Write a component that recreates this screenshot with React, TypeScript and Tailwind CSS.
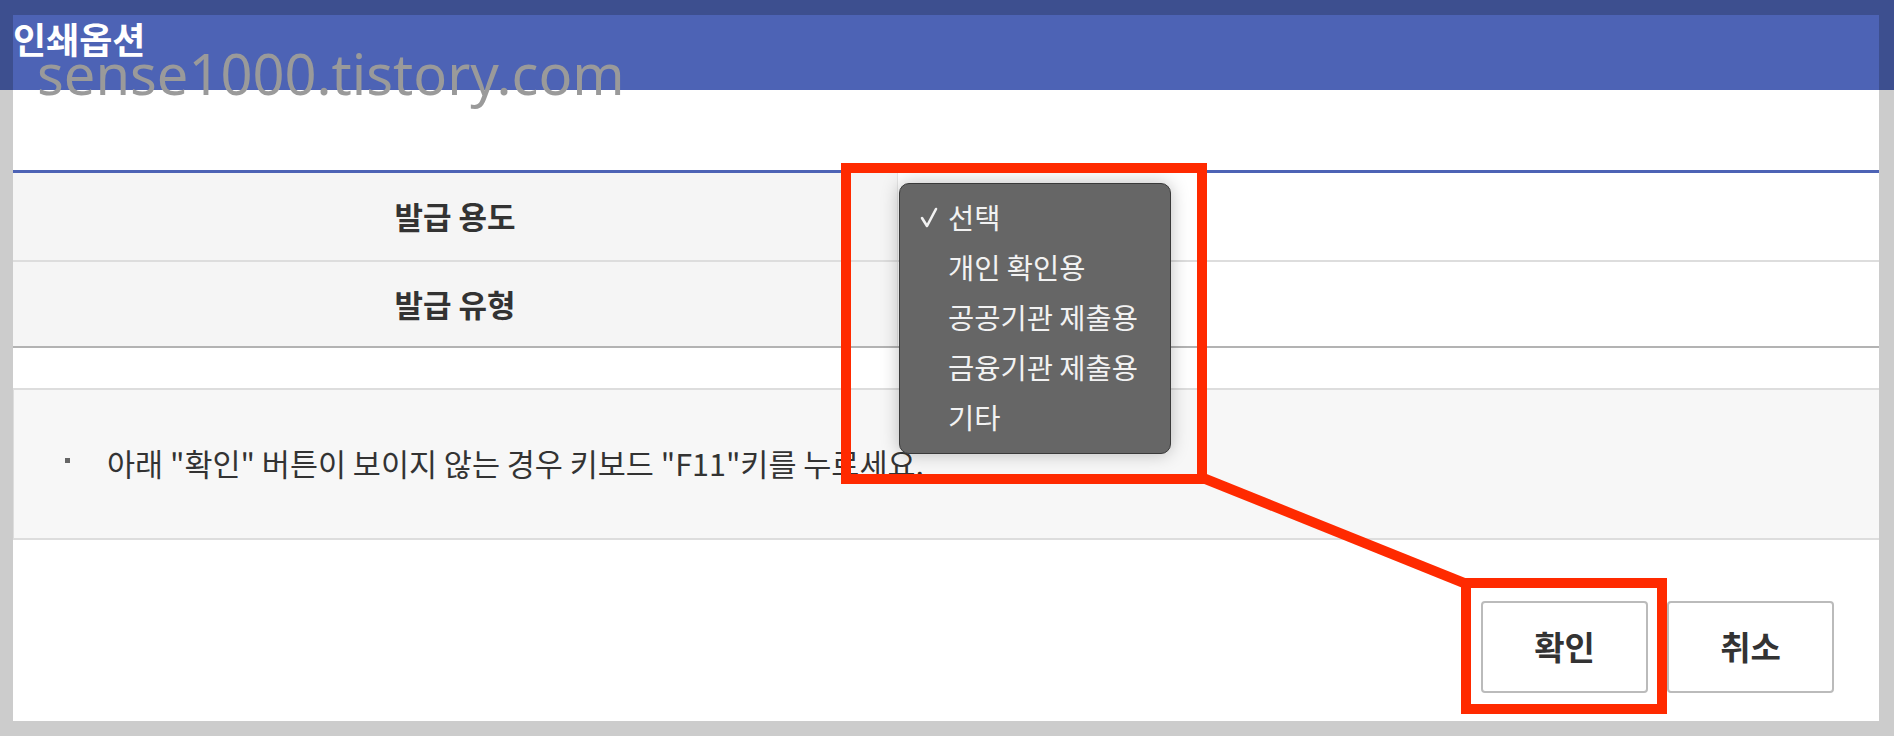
import React from 'react';

const options = [
  { label: '선택', checked: true },
  { label: '개인 확인용', checked: false },
  { label: '공공기관 제출용', checked: false },
  { label: '금융기관 제출용', checked: false },
  { label: '기타', checked: false },
];

const rows = ['발급 용도', '발급 유형'];

export default function App() {
  return (
    <div className="relative w-[1894px] h-[736px] overflow-hidden bg-[linear-gradient(to_bottom,#3d4f8f_90px,#cccccc_90px)] pt-[15px] pl-[13px] pr-[15px] font-['Noto_Sans_CJK_KR',sans-serif]">
      {/* popup window */}
      <div className="flex flex-col h-[706px] bg-white">
        <div className="h-[75px] bg-[#4d63b5] pt-[5px]">
          <h1 className="text-[36px] leading-none font-bold text-white">인쇄옵션</h1>
        </div>
        <div className="h-[80px]" />
        <div className="h-[3px] bg-[#4d63b5]" />

        <div className="border-b-2 border-[#b3b3b3]">
          {rows.map((label, idx) => (
            <div
              key={label}
              className={`flex ${idx === 0 ? 'h-[89px] border-b-2 border-[#dddddd]' : 'h-[84px]'}`}
            >
              <div className="w-[885px] flex items-center justify-center bg-[#f5f5f5] border-r border-[#e5e5e5] text-[31px] font-bold text-[#333333]">
                {label}
              </div>
              <div className="flex-1 bg-white" />
            </div>
          ))}
        </div>

        <div className="h-[40px]" />

        <div className="h-[152px] flex items-center bg-[#f7f7f7] border-y-2 border-l border-[#dddddd] pl-[51px]">
          <span className="w-[5px] h-[5px] bg-[#666666] -mt-[8px]" />
          <p className="ml-[37px] text-[30.5px] text-[#333333]">
            아래 "확인" 버튼이 보이지 않는 경우 키보드 "F11"키를 누르세요.
          </p>
        </div>

        <div className="flex justify-end gap-[19px] pt-[61px] pr-[45px]">
          <button className="w-[167px] h-[92px] rounded-[4px] border-2 border-[#bbbbbb] bg-white text-[33px] font-bold text-[#333333]">
            확인
          </button>
          <button className="w-[167px] h-[92px] rounded-[4px] border-2 border-[#bbbbbb] bg-white text-[33px] font-bold text-[#333333]">
            취소
          </button>
        </div>
      </div>

      {/* watermark */}
      <div className="absolute left-[37px] top-[45px] text-[56px] leading-none text-[#9a9a9a] font-['Noto_Sans',sans-serif] whitespace-nowrap">
        sense1000.tistory.com
      </div>

      {/* native select popup */}
      <div className="absolute left-[899px] top-[183px] w-[272px] h-[271px] rounded-[10px] bg-[#666666] border border-[#3a3a3a] shadow-[0_0_18px_rgba(0,0,0,0.25)] pt-[8px]">
        {options.map((opt) => (
          <div key={opt.label} className="relative h-[50px] flex items-center pl-[48px] text-[28.5px] text-[#f2f2f2]">
            {opt.checked && (
              <svg className="absolute left-[19px] top-[13px]" width="20" height="24" viewBox="0 0 20 24">
                <path d="M3 13 L8 21 L17 4" fill="none" stroke="#f2f2f2" strokeWidth="2.6" strokeLinecap="round" strokeLinejoin="round" />
              </svg>
            )}
            {opt.label}
          </div>
        ))}
      </div>

      {/* annotation */}
      <div className="absolute left-[841px] top-[163px] w-[366px] h-[321px] border-[10px] border-[#ff2a00]" />
      <div className="absolute left-[1461px] top-[578px] w-[206px] h-[136px] border-[10px] border-[#ff2a00]" />
      <svg className="absolute left-0 top-0 pointer-events-none" width="1894" height="736">
        <line x1="1203" y1="478" x2="1464" y2="583" stroke="#ff2a00" strokeWidth="10" />
      </svg>
    </div>
  );
}
